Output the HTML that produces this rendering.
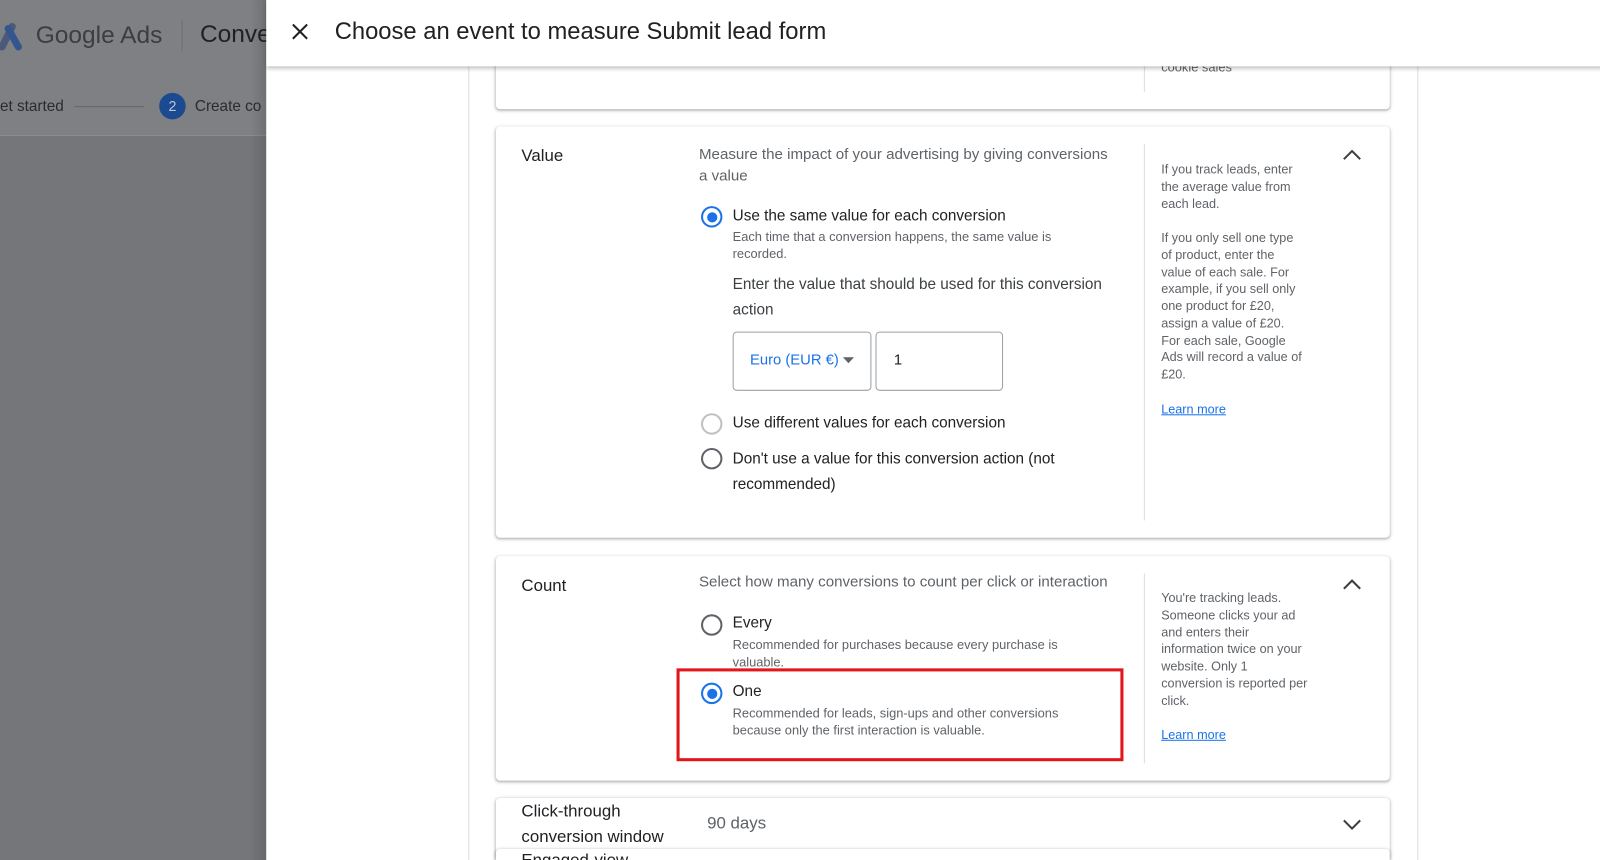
<!DOCTYPE html>
<html><head><meta charset="utf-8"><style>
*{box-sizing:border-box;margin:0;padding:0}
body{width:1600px;height:860px;overflow:hidden;position:relative;font-family:"Liberation Sans",sans-serif;background:#fff;color:#202124}
#w{position:absolute;left:0;top:0;width:1568px;height:843px;transform:scale(1.0204);transform-origin:0 0;overflow:hidden}
.a{position:absolute}
.card{position:absolute;left:486px;width:876px;background:#fff;border-radius:4px;box-shadow:0 1px 2px rgba(60,64,67,.3),0 1px 3px 1px rgba(60,64,67,.12)}
.lab{font-size:16.5px;color:#202124}
.desc{font-size:14.8px;color:#5f6368}
.opt{font-size:15px;color:#202124}
.sm{font-size:12.6px;color:#5f6368;line-height:16.7px}
.side{font-size:12.4px;color:#5f6368;line-height:16.75px;width:142px}
.lm{color:#1a73e8;text-decoration:underline}
.rad{position:absolute;width:21px;height:21px;border-radius:50%;border:2px solid #5f6368}
.rad.on{border-color:#1a73e8}
.rad.on::after{content:"";position:absolute;left:3.5px;top:3.5px;width:10px;height:10px;border-radius:50%;background:#1a73e8}
.vl{position:absolute;width:1px;background:#dadce0}
</style></head><body><div id="w">
<div class="a" style="left:0;top:0;width:261px;height:133px;background:#7f8083"></div>
<div class="a" style="left:0;top:133px;width:261px;height:727px;background:#75767a"></div>
<div class="a" style="left:0;top:0;width:261px;height:860px;background:linear-gradient(90deg,rgba(0,0,0,0) 245px,rgba(0,0,0,.12))"></div>
<svg class="a" style="left:0;top:22px" width="24" height="28"><path d="M2 24 L12 4" stroke="#4b5a7a" stroke-width="7" stroke-linecap="round"/><path d="M8 6 L18 24" stroke="#35558e" stroke-width="7" stroke-linecap="round"/></svg>
<div class="a" style="left:35px;top:21px;font-size:24px;color:#3c3d40">Google Ads</div>
<div class="a" style="left:178px;top:20px;width:1px;height:30px;background:#6e6f72"></div>
<div class="a" style="left:196px;top:20px;font-size:24px;color:#1f2023">Conve</div>
<div class="a" style="left:0;top:96px;font-size:15px;color:#2a2b2e">et started</div>
<div class="a" style="left:73px;top:104px;width:68px;height:1px;background:#66676a"></div>
<div class="a" style="left:156px;top:91px;width:26px;height:26px;border-radius:50%;background:#1c4a90;color:#b9c6dc;font-size:14px;text-align:center;line-height:26px">2</div>
<div class="a" style="left:191px;top:96px;font-size:15px;color:#2a2b2e">Create co</div>

<div class="a" style="left:261px;top:0;width:1339px;height:860px;background:#fff"></div>
<div class="vl" style="left:459px;top:60px;height:800px"></div>
<div class="vl" style="left:1389px;top:60px;height:800px"></div>

<div class="card" style="top:40px;height:67px"></div>
<div class="vl" style="left:1121px;top:62px;height:28px"></div>
<div class="a sm" style="left:1138px;top:58px">cookie sales</div>

<div class="card" style="top:124px;height:403px"></div>
<div class="a lab" style="left:511px;top:144px">Value</div>
<div class="a desc" style="left:685px;top:142px;width:410px;line-height:21px">Measure the impact of your advertising by giving conversions a value</div>
<div class="rad on" style="left:687px;top:202px"></div>
<div class="a opt" style="left:718px;top:203px">Use the same value for each conversion</div>
<div class="a sm" style="left:718px;top:224px;width:350px">Each time that a conversion happens, the same value is recorded.</div>
<div class="a opt" style="left:718px;top:266px;width:380px;line-height:25px;color:#3c4043">Enter the value that should be used for this conversion action</div>
<div class="a" style="left:718px;top:325px;width:136px;height:58px;border:1px solid #9aa0a6;border-radius:4px"></div>
<div class="a" style="left:735px;top:345px;font-size:14.5px;color:#1a73e8">Euro (EUR €)</div>
<svg class="a" style="left:826px;top:350px" width="12" height="7"><path d="M0 0h11L5.5 6z" fill="#5f6368"/></svg>
<div class="a" style="left:858px;top:325px;width:125px;height:58px;border:1px solid #9aa0a6;border-radius:4px"></div>
<div class="a" style="left:876px;top:345px;font-size:14.5px">1</div>
<div class="rad" style="left:687px;top:405px;border-color:#bdc1c6"></div>
<div class="a opt" style="left:718px;top:406px">Use different values for each conversion</div>
<div class="rad" style="left:687px;top:439px"></div>
<div class="a opt" style="left:718px;top:437px;width:360px;line-height:25px">Don't use a value for this conversion action (not recommended)</div>
<div class="vl" style="left:1121px;top:141px;height:369px"></div>
<div class="a side" style="left:1138px;top:158px">If you track leads, enter the average value from each lead.<br><br>If you only sell one type of product, enter the value of each sale. For example, if you sell only one product for £20, assign a value of £20. For each sale, Google Ads will record a value of £20.<br><br><span class="lm">Learn more</span></div>
<svg class="a" style="left:1315px;top:146px" width="20" height="12"><path d="M2 10L10 2l8 8" fill="none" stroke="#3c4043" stroke-width="2"/></svg>

<div class="card" style="top:545px;height:220px"></div>
<div class="a lab" style="left:511px;top:565px">Count</div>
<div class="a desc" style="left:685px;top:563px">Select how many conversions to count per click or interaction</div>
<div class="rad" style="left:687px;top:602px"></div>
<div class="a opt" style="left:718px;top:602px">Every</div>
<div class="a sm" style="left:718px;top:624px;width:350px">Recommended for purchases because every purchase is valuable.</div>
<div class="rad on" style="left:687px;top:669px"></div>
<div class="a opt" style="left:718px;top:669px">One</div>
<div class="a sm" style="left:718px;top:691px;width:350px">Recommended for leads, sign-ups and other conversions because only the first interaction is valuable.</div>
<div class="a" style="left:663px;top:655px;width:438px;height:91px;border:3px solid #e3161b"></div>
<div class="vl" style="left:1121px;top:562px;height:186px"></div>
<div class="a side" style="left:1138px;top:578px;width:145px">You're tracking leads. Someone clicks your ad and enters their information twice on your website. Only 1 conversion is reported per click.<br><br><span class="lm">Learn more</span></div>
<svg class="a" style="left:1315px;top:567px" width="20" height="12"><path d="M2 10L10 2l8 8" fill="none" stroke="#3c4043" stroke-width="2"/></svg>

<div class="card" style="top:782px;height:60px"></div>
<div class="a lab" style="left:511px;top:783px;line-height:25px;width:170px">Click-through conversion window</div>
<div class="a" style="left:693px;top:798px;font-size:16.5px;color:#5f6368">90 days</div>
<svg class="a" style="left:1315px;top:802px" width="20" height="12"><path d="M2 2l8 8 8-8" fill="none" stroke="#3c4043" stroke-width="2"/></svg>
<div class="card" style="top:832px;height:40px"></div>
<div class="a lab" style="left:511px;top:834px">Engaged-view</div>

<div class="a" style="left:261px;top:0;width:1339px;height:65px;background:#fff;box-shadow:0 2px 4px rgba(0,0,0,.25)"></div>
<svg class="a" style="left:285px;top:22px" width="18" height="18"><path d="M2 2L16 16M16 2L2 16" stroke="#202124" stroke-width="2"/></svg>
<div class="a" style="left:328px;top:17px;font-size:23.3px;color:#202124">Choose an event to measure Submit lead form</div>
</div></body></html>
